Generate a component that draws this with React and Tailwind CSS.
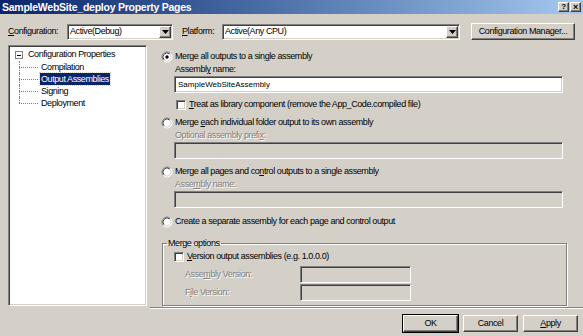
import React from "react";

const font = { fontFamily: '"Liberation Sans", Arial, sans-serif' };

// classic 3d borders
const sunken =
  "border border-t-[#808080] border-l-[#808080] border-b-white border-r-white shadow-[inset_1px_1px_0_#404040,inset_-1px_-1px_0_#d4d0c8]";
const raised =
  "border border-t-white border-l-white border-b-[#404040] border-r-[#404040] shadow-[inset_-1px_-1px_0_#808080]";
const disabledText = "text-[#808080] [text-shadow:1px_1px_0_#fff]";

function Radio({ checked }) {
  return (
    <svg width="12" height="12" viewBox="0 0 12 12" className="shrink-0">
      <circle cx="6" cy="6" r="5" fill="#fff" />
      <path d="M2.46 9.54 A5 5 0 0 1 9.54 2.46" fill="none" stroke="#808080" strokeWidth="1" />
      <path d="M9.54 2.46 A5 5 0 0 1 2.46 9.54" fill="none" stroke="#fff" strokeWidth="1" />
      <path d="M3.17 8.83 A4 4 0 0 1 8.83 3.17" fill="none" stroke="#404040" strokeWidth="1" />
      <path d="M8.83 3.17 A4 4 0 0 1 3.17 8.83" fill="none" stroke="#d4d0c8" strokeWidth="1" />
      {checked && <circle cx="6" cy="6" r="1.7" fill="#000" />}
    </svg>
  );
}

function Check() {
  return <div className={`w-[10px] h-[10px] bg-white shrink-0 ${sunken}`} />;
}

function U({ children }) {
  return <span className="underline underline-offset-1">{children}</span>;
}

function Select({ value, className }) {
  return (
    <div className={`h-[16px] bg-white flex items-center ${sunken} ${className}`}>
      <span className="flex-1 pl-[2px] leading-none">{value}</span>
      <div className={`w-[12px] h-[12px] mr-[1px] bg-[#d4d0c8] flex items-center justify-center ${raised}`}>
        <svg width="7" height="4" viewBox="0 0 7 4">
          <path d="M0 0 H7 L3.5 4 Z" fill="#000" />
        </svg>
      </div>
    </div>
  );
}

function Button({ children, isDefault }) {
  return (
    <div
      className={`w-[55px] h-[17px] flex items-center justify-center ${raised} ${
        isDefault ? "outline outline-1 outline-black" : ""
      }`}
    >
      <span>{children}</span>
    </div>
  );
}

function TreeChild({ label, selected, last }) {
  return (
    <div className="flex h-[12px] items-center">
      <div className="relative w-[21px] h-full ml-[10px]">
        <div
          className={`absolute left-0 top-0 border-l border-dotted border-[#808080] ${
            last ? "h-[6px]" : "h-full"
          }`}
        />
        <div className="absolute left-0 top-[6px] w-[19px] border-t border-dotted border-[#808080]" />
      </div>
      <span
        className={`px-[1px] leading-[12px] ${
          selected ? "bg-[#0a246a] text-white outline outline-1 outline-dotted outline-[#d4d0c8]" : ""
        }`}
      >
        {label}
      </span>
    </div>
  );
}

export default function App() {
  return (
    <div style={font} className="w-[583px] h-[336px] bg-[#d4d0c8] flex flex-col text-[9px] tracking-[-0.42px] text-black overflow-hidden">
      {/* title bar */}
      <div className="h-[14px] flex items-center justify-between px-[2px] bg-linear-to-r from-[#0a246a] to-[#a6caf0]">
        <span className="text-white font-bold text-[10.5px] tracking-[-0.25px] leading-none">SampleWebSite_deploy Property Pages</span>
        <div className="flex gap-[1px]">
          <div className={`w-[11px] h-[10px] bg-[#d4d0c8] flex items-center justify-center text-[8px] font-bold leading-none ${raised}`}>?</div>
          <div className={`w-[11px] h-[10px] bg-[#d4d0c8] flex items-center justify-center text-[9px] font-bold leading-none ${raised}`}>×</div>
        </div>
      </div>

      {/* configuration row */}
      <div className="mt-[9px] h-[17px] flex items-center pl-[8px]">
        <span className="w-[59px]"><U>C</U>onfiguration:</span>
        <Select value="Active(Debug)" className="w-[106px]" />
        <span className="ml-[9px] w-[40px]"><U>P</U>latform:</span>
        <Select value="Active(Any CPU)" className="w-[238px]" />
        <div className={`ml-[11px] w-[104px] h-[17px] flex items-center justify-center ${raised}`}>
          <span>Configuration Manager...</span>
        </div>
      </div>

      {/* main */}
      <div className="mt-[5px] h-[261px] flex">
        {/* tree */}
        <div className={`ml-[8px] w-[139px] h-full bg-white pt-[3px] ${sunken}`}>
          <div className="flex h-[12px] items-center">
            <div className="ml-[6px] w-[8px] h-[8px] border border-[#808080] bg-white flex items-center justify-center">
              <div className="w-[4px] border-t border-black" />
            </div>
            <span className="ml-[5px]">Configuration Properties</span>
          </div>
          <TreeChild label="Compilation" />
          <TreeChild label="Output Assemblies" selected />
          <TreeChild label="Signing" />
          <TreeChild label="Deployment" last />
        </div>

        {/* options */}
        <div className="ml-[15px] w-[406px] flex flex-col">
          <div className="mt-[6px] h-[12px] flex items-center gap-[2px] -ml-[1px]">
            <Radio checked />
            <span>Merge all outputs to a sin<U>g</U>le assembly</span>
          </div>
          <div className="mt-[1px] h-[12px] flex items-center ml-[13px]">
            <span>Assembl<U>y</U> name:</span>
          </div>
          <div className={`ml-[12px] w-[389px] h-[17px] bg-white flex items-center pl-[3px] text-[8px] tracking-normal ${sunken}`}>
            SampleWebSiteAssembly
          </div>
          <div className="mt-[6px] h-[12px] flex items-center gap-[3px] ml-[14px]">
            <Check />
            <span><U>T</U>reat as library component (remove the App_Code.compiled file)</span>
          </div>

          <div className="mt-[6px] h-[12px] flex items-center gap-[2px] -ml-[1px]">
            <Radio />
            <span>Merge <U>e</U>ach individual folder output to its own assembly</span>
          </div>
          <div className={`mt-[1px] h-[12px] flex items-center ml-[13px] ${disabledText}`}>
            <span>Optional assembly prefi<U>x</U>:</span>
          </div>
          <div className={`ml-[12px] w-[389px] h-[17px] bg-[#d4d0c8] ${sunken}`} />

          <div className="mt-[7px] h-[12px] flex items-center gap-[2px] -ml-[1px]">
            <Radio />
            <span>Merge all pages and co<U>n</U>trol outputs to a single assembly</span>
          </div>
          <div className={`mt-[1px] h-[12px] flex items-center ml-[13px] ${disabledText}`}>
            <span>Asse<U>m</U>bly name:</span>
          </div>
          <div className={`ml-[12px] w-[389px] h-[17px] bg-[#d4d0c8] ${sunken}`} />

          <div className="mt-[8px] h-[12px] flex items-center gap-[2px] -ml-[1px]">
            <Radio />
            <span>Create a separate assembly for each page and control output</span>
          </div>

          {/* merge options group */}
          <fieldset className="mt-[10px] w-[405px] h-[68px] border border-[#808080] shadow-[1px_1px_0_#fff,inset_1px_1px_0_#fff] px-[11px]">
            <legend className="px-[1px] -ml-[7px] leading-[10px]">Merge options</legend>
            <div className="mt-[3px] h-[12px] flex items-center gap-[3px]">
              <Check />
              <span><U>V</U>ersion output assemblies (e.g. 1.0.0.0)</span>
            </div>
            <div className="mt-[3px] h-[17px] flex items-center">
              <span className={`w-[126px] pl-[11px] ${disabledText}`}>Asse<U>m</U>bly Version:</span>
              <div className={`w-[111px] h-[17px] bg-[#d4d0c8] ${sunken}`} />
            </div>
            <div className="mt-[1px] h-[17px] flex items-center">
              <span className={`w-[126px] pl-[11px] ${disabledText}`}>F<U>i</U>le Version:</span>
              <div className={`w-[111px] h-[17px] bg-[#d4d0c8] ${sunken}`} />
            </div>
          </fieldset>
        </div>
      </div>

      <div className="ml-[150px] mt-[1px] border-t border-[#808080] border-b border-b-white" />

      {/* buttons */}
      <div className="mt-[6px] flex justify-end gap-[5px] pr-[5px]">
        <Button isDefault>OK</Button>
        <Button>Cancel</Button>
        <Button><U>A</U>pply</Button>
      </div>
    </div>
  );
}
